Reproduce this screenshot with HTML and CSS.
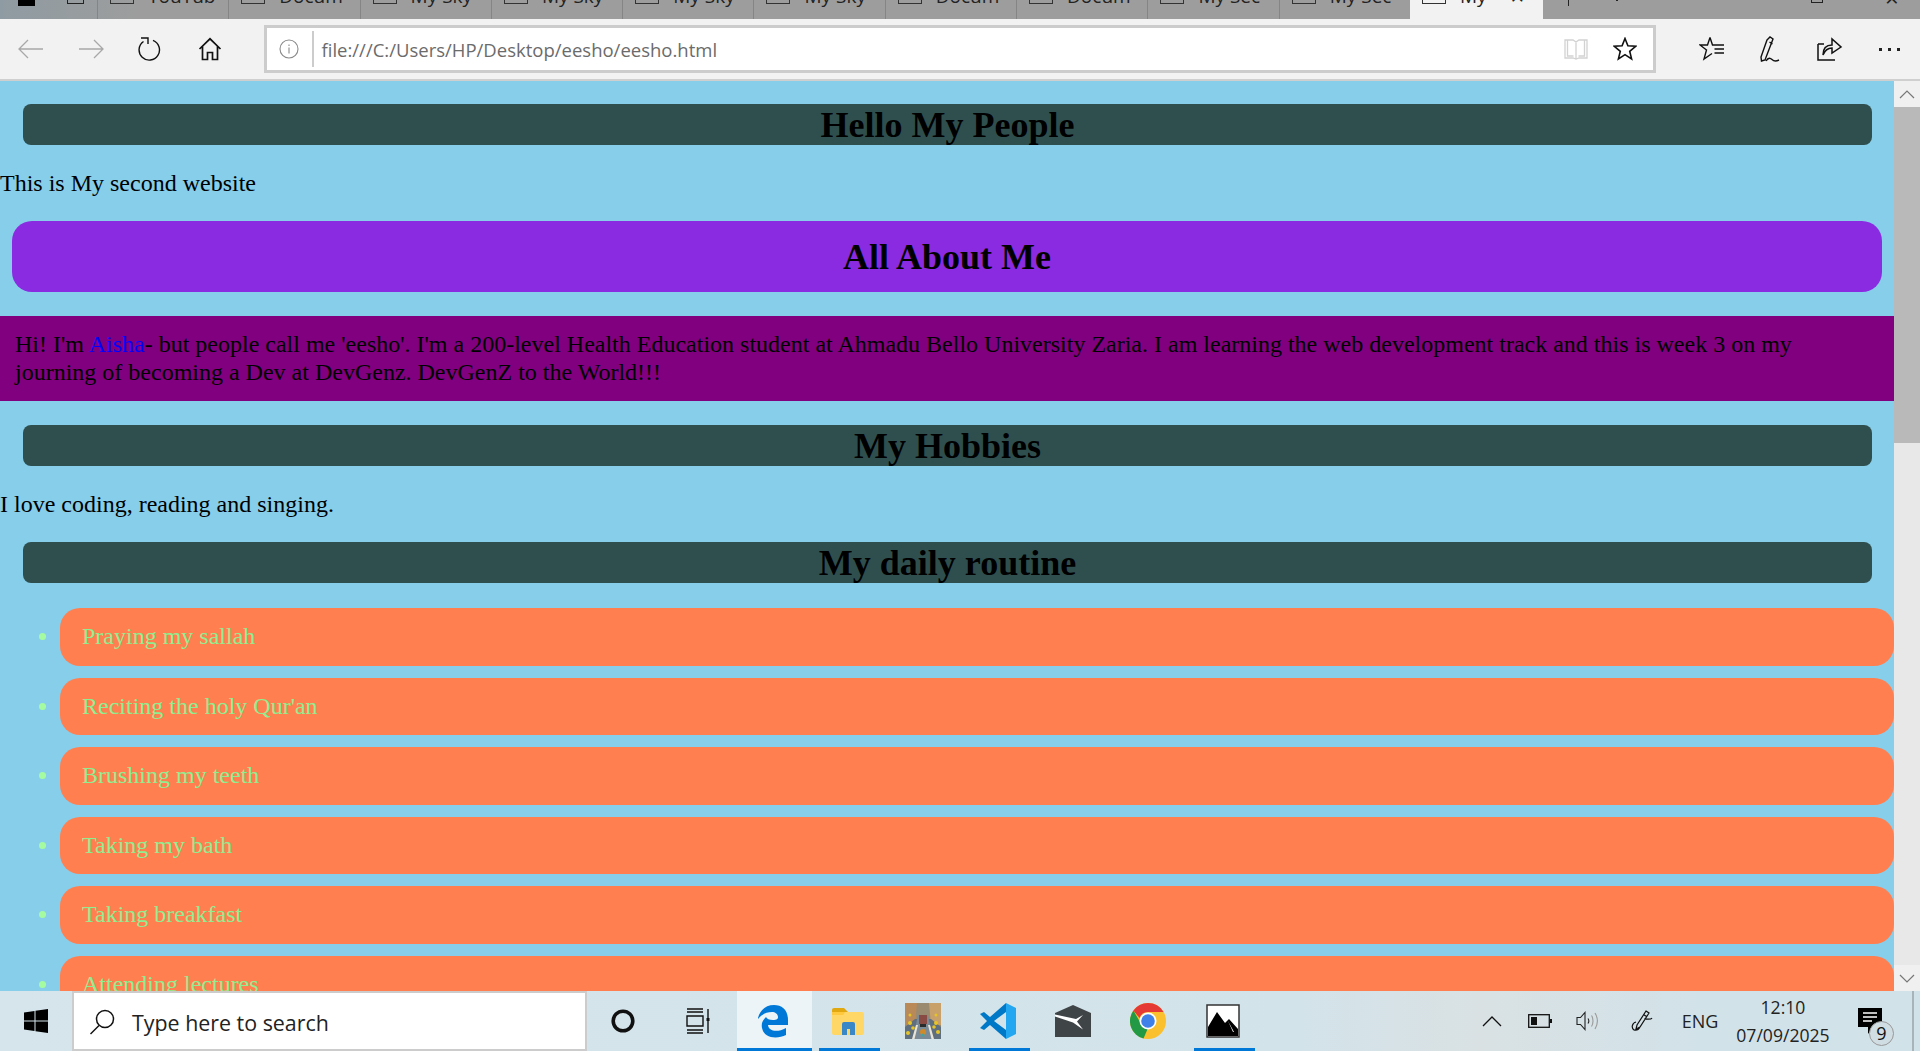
FILE: index.html
```html
<!DOCTYPE html>
<html lang="en">
<head>
    <meta charset="UTF-8">
    <meta name="viewport" content="width=device-width, initial-scale=1.0">
    <title>My Website</title>
    <link rel="stylesheet" href="styles.css">
</head>
<body>
    <div class="tab-strip">
        <div class="tab-start">
            <span class="tab-blob"></span>
            <span class="tab-square"></span>
        </div>
        <div class="tab"><span class="tab-icon"></span><span class="tab-label">YouTub</span></div>
        <div class="tab"><span class="tab-icon"></span><span class="tab-label">Docum</span></div>
        <div class="tab"><span class="tab-icon"></span><span class="tab-label">My Sky</span></div>
        <div class="tab"><span class="tab-icon"></span><span class="tab-label">My Sky</span></div>
        <div class="tab"><span class="tab-icon"></span><span class="tab-label">My Sky</span></div>
        <div class="tab"><span class="tab-icon"></span><span class="tab-label">My Sky</span></div>
        <div class="tab"><span class="tab-icon"></span><span class="tab-label">Docum</span></div>
        <div class="tab"><span class="tab-icon"></span><span class="tab-label">Docum</span></div>
        <div class="tab"><span class="tab-icon"></span><span class="tab-label">My Sec</span></div>
        <div class="tab"><span class="tab-icon"></span><span class="tab-label">My Sec</span></div>
        <div class="tab tab-active"><span class="tab-icon"></span><span class="tab-label">My</span><span class="tab-close">×</span></div>
        <span class="new-tab"></span>
        <span class="new-dot"></span>
        <span class="win-restore"></span>
        <span class="win-close">×</span>
    </div>

    <div class="toolbar">
        <div class="nav-btn">
            <svg width="26" height="22" viewBox="0 0 26 22" fill="none" stroke="#a8a8a8" stroke-width="1.3"><path d="M1 11H25M10 2 1 11l9 9"/></svg>
        </div>
        <div class="nav-btn">
            <svg width="26" height="22" viewBox="0 0 26 22" fill="none" stroke="#a8a8a8" stroke-width="1.3"><path d="M1 11H25M16 2l9 9-9 9"/></svg>
        </div>
        <div class="nav-btn">
            <svg width="24" height="24" viewBox="0 0 24 24" fill="none" stroke="#111" stroke-width="1.4"><path d="M15 3.4A10.2 10.2 0 1 1 5.5 4.5M3 1h7v6"/></svg>
        </div>
        <div class="nav-btn">
            <svg width="24" height="24" viewBox="0 0 24 24" fill="none" stroke="#111" stroke-width="1.7"><path d="M1.5 12 12 1.8 22.5 12M4.5 9.5V22.500h5v-7h5v7h5V9.500"/></svg>
        </div>
        <div class="address-bar">
            <div class="address-info">
                <svg width="20" height="20" viewBox="0 0 20 20" fill="none" stroke="#8a8a8a" stroke-width="1.1"><circle cx="10" cy="10" r="9"/><path d="M10 8.500v6M10 5.500v1.500"/></svg>
            </div>
            <span class="address-text">file:///C:/Users/HP/Desktop/eesho/eesho.html</span>
            <div class="address-actions">
                <svg width="24" height="22" viewBox="0 0 24 22" fill="none" stroke="#d2d2d2" stroke-width="1.3"><path d="M1 2h8l3 2 3-2h8v18h-8l-3 1-3-1H1zM12 4v17M3.500 2v16h6M20.500 2v16h-6"/></svg>
                <svg width="24" height="24" viewBox="0 0 24 24" fill="none" stroke="#111" stroke-width="1.6"><path d="M12 1.500l2.900 7.300 7.800.5-6 5 1.900 7.600-6.600-4.200-6.600 4.200 1.900-7.600-6-5 7.800-.5z"/></svg>
            </div>
        </div>
        <div class="toolbar-right">
            <div class="tool-btn">
                <svg width="26" height="26" viewBox="0 0 26 26" fill="none" stroke="#111" stroke-width="1.4"><path d="M11 1.500 8.500 9H1l6.500 5L5 23l8-5.500M11 1.500 13.500 9H25M15.500 13H25M15.500 17H25"/></svg>
            </div>
            <div class="tool-btn">
                <svg width="26" height="26" viewBox="0 0 26 26" fill="none" stroke="#111" stroke-width="1.4"><path d="M9 4l3-3 3 2-8 21-3.500 1-.500-4zM11.500 6l3 2M8 25c2.500-4 4.500-3 6-1.500s4 2 7 .500"/></svg>
            </div>
            <div class="tool-btn">
                <svg width="26" height="26" viewBox="0 0 26 26" fill="none" stroke="#111" stroke-width="1.5"><path d="M1 8v16h17M6 19c0-6 3-10 9-10V3l9 8-9 6v-5c-4 0-7 2-9 7zM1 8h6"/></svg>
            </div>
            <div class="tool-btn tool-dots">
                <i></i><i></i><i></i>
            </div>
        </div>
    </div>

    <div class="view">
        <div class="page">
            <h1 class="bar">Hello My People</h1>
            <p class="line">This is My second website</p>
            <h2 class="banner">All About Me</h2>
            <p class="about">Hi! I'm <span class="name">Aisha</span>- but people call me 'eesho'. I'm a 200-level Health Education student at Ahmadu Bello University Zaria. I am learning the web development track and this is week 3 on my journing of becoming a Dev at DevGenz. DevGenZ to the World!!!</p>
            <h2 class="bar">My Hobbies</h2>
            <p class="line">I love coding, reading and singing.</p>
            <h2 class="bar">My daily routine</h2>
            <ul class="routine">
                <li>Praying my sallah</li>
                <li>Reciting the holy Qur'an</li>
                <li>Brushing my teeth</li>
                <li>Taking my bath</li>
                <li>Taking breakfast</li>
                <li>Attending lectures</li>
            </ul>
        </div>
        <div class="scrollbar">
            <div class="scroll-btn">
                <svg width="16" height="9" viewBox="0 0 16 9" fill="none" stroke="#777" stroke-width="1.2"><path d="M1 8l7-7 7 7"/></svg>
            </div>
            <div class="scroll-thumb"></div>
            <div class="scroll-track"></div>
            <div class="scroll-btn">
                <svg width="16" height="9" viewBox="0 0 16 9" fill="none" stroke="#777" stroke-width="1.2"><path d="M1 1l7 7 7-7"/></svg>
            </div>
        </div>
    </div>

    <div class="taskbar">
        <div class="start">
            <svg width="24" height="24" viewBox="0 0 24 24" fill="#000"><path d="M0 3.500 10.500 2v9.500H0zM11.500 1.800 24 0v11.500H11.500zM0 12.500h10.500V22L0 20.500zM11.500 12.500H24V24l-12.500-1.800z"/></svg>
        </div>
        <div class="search">
            <svg width="26" height="26" viewBox="0 0 26 26" fill="none" stroke="#111" stroke-width="1.5"><circle cx="16" cy="10" r="8.500"/><path d="M10 16.500 1.500 25"/></svg>
            <span class="search-text">Type here to search</span>
        </div>
        <div class="slot">
            <svg width="24" height="24" viewBox="0 0 24 24" fill="none" stroke="#111" stroke-width="3.600"><circle cx="12" cy="12" r="9.800"/></svg>
        </div>
        <div class="slot">
            <svg width="24" height="26" viewBox="0 0 24 26" fill="none" stroke="#111" stroke-width="1.400"><path d="M1 1h16M1 4h16M1 8h16v10H1zM1 22h16M1 25h16M22 1v24"/><rect x="20.500" y="10" width="3" height="3" fill="#111" stroke="none"/></svg>
        </div>
        <div class="slot slot-open slot-active">
            <svg width="32" height="33" viewBox="0 0 32 33"><path fill="#0078d7" d="M1 13C3 5 9 0 17 0c8 0 14 5 14 15v5H11c.5 6 9 8 18 3v7c-8 4-22 4-24-7-1-5 1-8 4-11 1 2 3 3 7 3 4 0 5-1 5-3 0-3-3-5-6-5-6 0-11 3-14 7z"/></svg>
        </div>
        <div class="slot slot-open">
            <svg width="32" height="28" viewBox="0 0 32 28"><path fill="#e2a80f" d="M0 3a2 2 0 0 1 2-2h10l4 4H0z"/><path fill="#ffd766" d="M0 5h30a2 2 0 0 1 2 2v19a2 2 0 0 1-2 2H2a2 2 0 0 1-2-2z"/><path fill="#ffc83d" d="M0 5h13l-2 3H0z"/><path fill="#3a87c8" d="M10 28v-11a2 2 0 0 1 2-2h9a2 2 0 0 1 2 2v11h-5v-6h-3v6z"/></svg>
        </div>
        <div class="slot">
            <svg width="36" height="36" viewBox="0 0 36 36"><rect width="36" height="36" fill="#9a8a70"/><path fill="#b98a58" d="M0 0h12l-2 22H0z"/><path fill="#c7a06a" d="M24 0h12v22H26z"/><path fill="#5f6f7d" d="M0 36V24l10-8h16l10 8v12z"/><path fill="#7a8a96" d="M13 12h10l5 24H8z"/><path fill="#e9e4d6" d="M11 22l-4 14h2.500l3.500-14zM25 22l4 14h-2.500L23 22z"/><rect x="14" y="12" width="8" height="9" fill="#8a4a44"/><rect x="15" y="21" width="6" height="3" fill="#2b2b2b"/><circle cx="18" cy="29" r="3" fill="#d08a2a"/><circle cx="18" cy="32" r="1.500" fill="#3fa7a0"/><circle cx="5" cy="20" r="2" fill="#e6c428"/><circle cx="31" cy="20" r="2" fill="#e6c428"/><circle cx="8" cy="25" r="1.800" fill="#e6c428"/><circle cx="29" cy="24" r="1.800" fill="#e6c428"/><circle cx="5" cy="12" r="1.500" fill="#e6c428"/><circle cx="31" cy="12" r="1.500" fill="#e6c428"/><circle cx="33" cy="29" r="2" fill="#e6c428"/><circle cx="3" cy="30" r="2" fill="#e6c428"/></svg>
        </div>
        <div class="slot slot-open">
            <svg width="36" height="36" viewBox="0 0 36 36"><path fill="#22a7f0" d="M26 0l10 5v26l-10 5z"/><path fill="#0078c8" d="M26 0v9L14 18l12 9v9L10 22l-6 5-4-2 7-7-7-7 4-2 6 5z"/></svg>
        </div>
        <div class="slot">
            <svg width="36" height="32" viewBox="0 0 36 32"><path fill="#3f4447" d="M0 8 18 0l18 8v24H0z"/><path fill="#fff" d="M0 9.500 21 14l7-4-6 6.500 6 8-10-7L0 11.500z"/></svg>
        </div>
        <div class="slot">
            <svg width="36" height="36" viewBox="0 0 36 36"><circle cx="18" cy="18" r="18" fill="#fbc02d"/><path fill="#e53935" d="M18 0a18 18 0 0 1 15.600 9H18a9 9 0 0 0-8.500 6L3.400 7.500A18 18 0 0 1 18 0z"/><path fill="#229a45" d="M3.400 7.500 10 19c1 3.500 4 6 8 6l-4.500 10.500A18 18 0 0 1 3.400 7.500z"/><circle cx="18" cy="18" r="8.500" fill="#fff"/><circle cx="18" cy="18" r="6.800" fill="#3f7fe8"/></svg>
        </div>
        <div class="slot slot-open">
            <svg width="34" height="34" viewBox="0 0 34 34"><rect x="1" y="1" width="32" height="32" fill="#fff" stroke="#333" stroke-width="1.500"/><path fill="#000" d="M2 32 2 23 11 8l8 11 4-4 9 10v7z"/><path fill="#fff" d="M22 17l6 11-1 0z"/></svg>
        </div>
        <div class="tray">
            <div class="tray-item tray-caret">
                <svg width="20" height="11" viewBox="0 0 20 11" fill="none" stroke="#111" stroke-width="1.300"><path d="M1 10l9-9 9 9"/></svg>
            </div>
            <div class="tray-item tray-battery">
                <svg width="24" height="14" viewBox="0 0 24 14"><rect x=".7" y=".7" width="20.600" height="12.600" fill="none" stroke="#111" stroke-width="1.300"/><rect x="3" y="3" width="6" height="8" fill="#111"/><rect x="22" y="5" width="2" height="4" fill="#111"/></svg>
            </div>
            <div class="tray-item tray-volume">
                <svg width="24" height="20" viewBox="0 0 24 20" fill="none" stroke="#222" stroke-width="1.100"><path d="M1 6.500h3.500L9 1.500v17l-4.500-5H1zM12 7.500c1 1.500 1 3.500 0 5"/><path stroke="#999" d="M15.500 4.500c2 3 2 8 0 11M19 2c3 5 3 11 0 16"/></svg>
            </div>
            <div class="tray-item tray-pen">
                <svg width="22" height="22" viewBox="0 0 22 22" fill="none" stroke="#111" stroke-width="1.200"><path d="M15 1l3 2-9 14-4 2 1-4zM12.500 4.500l3 2M5 12c-4 1-5 6-2 8 4 1 6-3 6-3M13 9c3 0 7 1 8-1"/></svg>
            </div>
            <div class="tray-item tray-lang">ENG</div>
            <div class="tray-item tray-clock"><span>12:10</span><span>07/09/2025</span></div>
            <div class="tray-item tray-notify">
                <svg width="24" height="26" viewBox="0 0 24 26"><path fill="#000" d="M0 0h24v19H15l-5 7v-7H0z"/><path stroke="#fff" stroke-width="1.300" d="M5 5h14M5 9h14M5 13h9"/></svg>
                <span class="notify-badge">9</span>
            </div>
            <span class="show-desktop"></span>
        </div>
    </div>
</body>
</html>
```

FILE: styles.css
```css
html, body {
    height: 100%;
    margin: 0;
}

body {
    display: flex;
    flex-direction: column;
    height: 1051px;
    overflow: hidden;
    font-family: "Liberation Serif", serif;
    background-color: #87ceeb;
}

/* tab strip, the window is cut off at the top so labels are clipped */
.tab-strip {
    display: flex;
    position: relative;
    flex: none;
    height: 19px;
    overflow: hidden;
    background: linear-gradient(90deg, #8f9ba2 0, #9d9d9d 140px, #9d9d9d 100%);
    font-family: "Open Sans", sans-serif;
}

.tab-start {
    display: flex;
    flex: none;
    width: 97px;
    height: 19px;
    align-items: flex-start;
}

.tab-blob {
    width: 17px;
    height: 6px;
    margin-left: 18px;
    background-color: #000;
}

.tab-square {
    width: 15px;
    height: 3px;
    margin-left: 32px;
    border: 1px solid #222;
    border-top: none;
}

.tab {
    display: flex;
    flex: none;
    width: 131.3px;
    height: 19px;
    box-sizing: border-box;
    border-left: 1px solid #858585;
    align-items: flex-start;
    font-size: 19px;
    color: #222;
}

.tab-icon {
    flex: none;
    width: 22px;
    height: 3px;
    margin-left: 12px;
    border: 1px solid #333;
    border-top: none;
}

.tab-label {
    margin-top: -17px;
    margin-left: 14px;
    line-height: 26px;
    white-space: nowrap;
}

.tab-active {
    width: 133px;
    border-left: none;
    background-color: #f2f2f2;
}

.tab-close {
    margin-top: -17px;
    margin-left: 24px;
    line-height: 26px;
    font-size: 24px;
}

.new-tab {
    width: 1px;
    height: 6px;
    margin-left: 25px;
    background-color: #222;
}

.new-dot {
    width: 2px;
    height: 1px;
    margin-left: 47px;
    background-color: #222;
}

.win-restore {
    width: 10px;
    height: 2px;
    margin-left: 193px;
    border: 1px solid #222;
    border-top: none;
}

.win-close {
    margin-top: -15px;
    margin-left: 62px;
    line-height: 26px;
    font-size: 24px;
    color: #222;
}

/* address bar row */
.toolbar {
    display: flex;
    flex: none;
    box-sizing: border-box;
    height: 62px;
    padding: 6px 0;
    align-items: stretch;
    background-color: #f2f2f2;
    border-bottom: 2px solid #cfcfcf;
}

.nav-btn {
    display: flex;
    flex: none;
    width: 59.5px;
    align-items: center;
    justify-content: center;
}

.nav-btn:first-child {
    width: 61px;
}

.address-bar {
    display: flex;
    flex: none;
    width: 1392px;
    margin-left: 24px;
    box-sizing: border-box;
    align-items: center;
    background-color: #fff;
    border: 3px solid #ccc;
}

.address-info {
    display: flex;
    flex: none;
    width: 45px;
    height: 36px;
    align-items: center;
    justify-content: center;
    border-right: 2px solid #ccc;
}

.address-text {
    margin-left: 8px;
    font-family: "Open Sans", sans-serif;
    font-size: 18.5px;
    color: #6b6b6b;
}

.address-actions {
    display: flex;
    gap: 25px;
    margin-left: auto;
    margin-right: 16px;
    align-items: center;
}

.toolbar-right {
    display: flex;
    flex: 1;
    padding-left: 27px;
    align-items: center;
}

.tool-btn {
    display: flex;
    width: 59px;
    justify-content: center;
}

.tool-dots {
    gap: 6px;
}

.tool-dots i {
    width: 3px;
    height: 3px;
    background-color: #222;
}

/* page content */
.view {
    display: flex;
    flex: 1;
    min-height: 0;
}

.page {
    flex: 1;
    min-width: 0;
    overflow: hidden;
    padding-top: 23px;
    font-size: 24px;
    color: #000;
}

.bar {
    margin: 0 22px 0 23px;
    padding-top: 1px;
    font-size: 36px;
    line-height: 40px;
    font-weight: bold;
    text-align: center;
    background-color: #2f4f4f;
    border-radius: 8px;
}

.banner {
    margin: 0 12px;
    padding: 16px 15px 15px;
    font-size: 36px;
    line-height: 40px;
    text-align: center;
    background-color: #8a2be2;
    border-radius: 20px;
}

.line {
    margin: 24px 0;
    line-height: 28px;
}

.about {
    margin: 24px 0;
    padding: 15px;
    line-height: 27.5px;
    background-color: #800080;
}

.name {
    color: #0000ff;
}

.routine {
    margin: 25px 0 0 0;
    padding-left: 60px;
    color: #90ee90;
}

.routine li {
    margin-bottom: 12px;
    padding: 15px 22px;
    line-height: 27.6px;
    background-color: #ff7f50;
    border-radius: 20px;
}

.routine li::marker {
    color: #a5fca0;
}

/* page scrollbar */
.scrollbar {
    display: flex;
    flex: none;
    flex-direction: column;
    width: 26px;
    background-color: #e8e8e8;
}

.scroll-btn {
    display: flex;
    flex: none;
    height: 26px;
    align-items: center;
    justify-content: center;
    background-color: #f0f0f0;
}

.scroll-thumb {
    flex: none;
    height: 336px;
    background-color: #b9b9b9;
}

.scroll-track {
    flex: 1;
}

/* windows taskbar */
.taskbar {
    display: flex;
    flex: none;
    height: 60px;
    background: linear-gradient(90deg, #d6e5ec 0, #d3e3ea 1300px, #d9e1e3 1480px, #d2e2e9 1700px);
    font-family: "Open Sans", sans-serif;
    color: #222;
}

.start {
    display: flex;
    flex: none;
    width: 72px;
    align-items: center;
    justify-content: center;
}

.search {
    display: flex;
    flex: none;
    box-sizing: border-box;
    width: 515px;
    padding: 2px 0 0 15px;
    align-items: center;
    background-color: #fff;
    border: 2px solid #ccc;
}

.search-text {
    margin-left: 17px;
    font-size: 21.4px;
}

.slot {
    display: flex;
    flex: none;
    position: relative;
    box-sizing: border-box;
    width: 75px;
    padding-right: 4px;
    align-items: center;
    justify-content: center;
}

.slot-open::after {
    content: "";
    position: absolute;
    left: 7px;
    right: 7px;
    bottom: 0;
    height: 3px;
    background-color: #0078d7;
}

.slot-active {
    background-color: #edf4f7;
}

.slot-active::after {
    left: 0;
    right: 0;
}

.tray {
    display: flex;
    flex: none;
    margin-left: auto;
    width: 452px;
    align-items: stretch;
}

.tray-item {
    display: flex;
    flex: none;
    align-items: center;
    justify-content: center;
}

.tray-caret, .tray-battery, .tray-volume {
    width: 48px;
}

.tray-pen {
    width: 60px;
}

.tray-lang {
    width: 56px;
    font-size: 18px;
}

.tray-clock {
    flex-direction: column;
    width: 110px;
    gap: 6px;
    font-size: 17.6px;
    line-height: 22px;
}

.tray-notify {
    position: relative;
    width: 64px;
}

.notify-badge {
    position: absolute;
    left: 31px;
    top: 30px;
    width: 23px;
    height: 23px;
    border: 1px solid #999;
    border-radius: 50%;
    background-color: #d0dde2;
    font-size: 18px;
    line-height: 23px;
    text-align: center;
    color: #111;
}

.show-desktop {
    width: 2px;
    margin-left: 10px;
    background-color: #a9b4b9;
}
```
